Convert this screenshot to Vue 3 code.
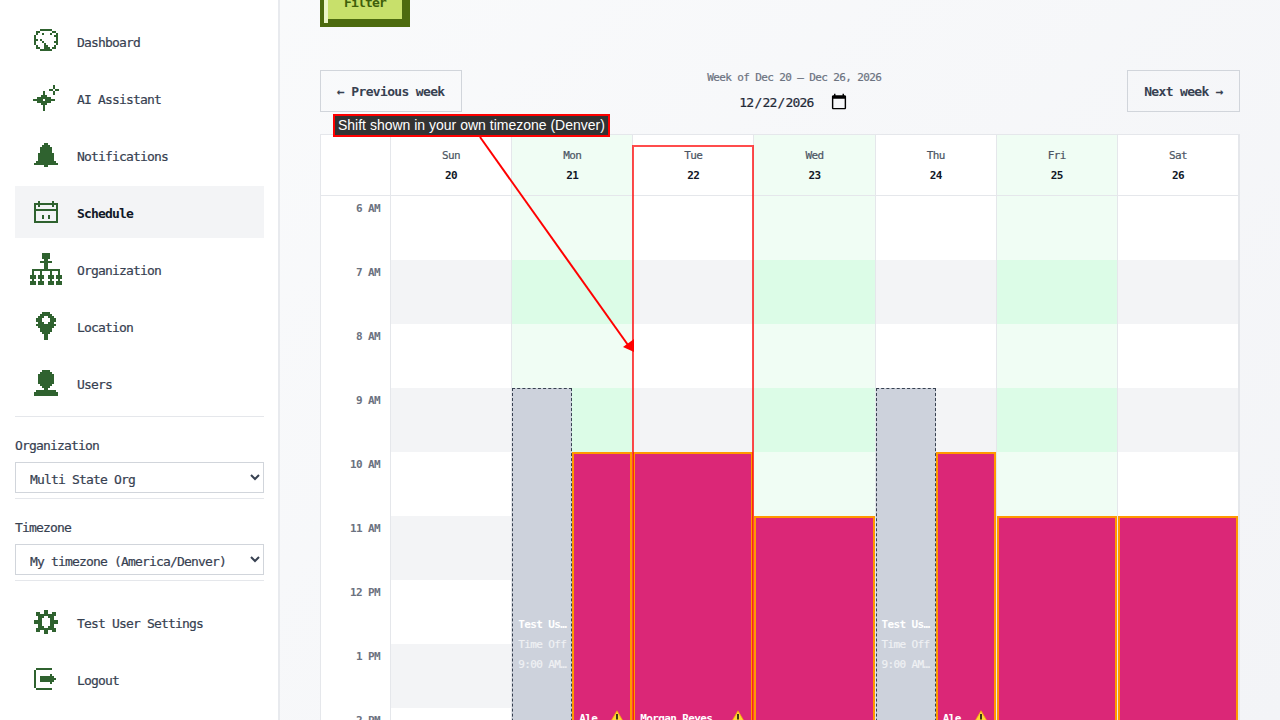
<script setup>
const rows = (list) => {
  let d = ''
  list.forEach((line, y) => {
    ;[...line].forEach((c, x) => {
      if (c === '#') d += `M${x} ${y}h1v1h-1z`
    })
  })
  return { d, w: list[0].length, h: list.length }
}

const icons = {
  dashboard: rows(['...######...','.##......##.','.#..#...#..#','#.........##','#..........#','##.#.......#','#...#.....##','#....#.....#','.#...##...#.','.##..###.##.','...######...','............']),
  ai: rows(['..........#..','..........#..','........##.##','.....#....#..','.....#....#..','....###......','..#######....','#####.#####..','..#######....','....###......','.....#.......','.....#.......','.....#.......']),
  bell: rows(['.....##.....','....####....','...######...','...######...','...######...','..########..','..########..','..########..','..########..','.##########.','############','.....##.....']),
  calendar: rows(['..#......#..','############','#.#......#.#','#..........#','############','#..........#','#..........#','#...#..#...#','#...#..#...#','#..........#','############']),
  org: rows(['......####......','......####......','......####......','.......##.......','.....######.....','.......##.......','.......##.......','.......##.......','.##############.','.#...#....#...#.','.#...#....#...#.','###.###..###.###','###.###..###.###','.#...#....#...#.','###.###..###.###','###.###..###.###']),
  location: rows(['...####...','..######..','.###..###.','###....###','###....###','.###..###.','##########','.########.','..######..','..######..','...####...','....##....','....##....','....##....']),
  users: rows(['....####....','...######...','..########..','..########..','..########..','..########..','..########..','...######...','....####....','.....##.....','.##########.','############','############']),
  gear: rows(['.....##.....','.##..##..##.','.##########.','..###..###..','..##....##..','####....####','####....####','..##....##..','..###..###..','.##########.','.##..##..##.','.....##.....']),
  logout: rows(['.########...','#...........','#...........','#.......#...','#..#######..','#..########.','#..#######..','#.......#...','#...........','#...........','.########...']),
}

const nav = [
  { label: 'Dashboard', icon: icons.dashboard },
  { label: 'AI Assistant', icon: icons.ai },
  { label: 'Notifications', icon: icons.bell },
  { label: 'Schedule', icon: icons.calendar, active: true },
  { label: 'Organization', icon: icons.org },
  { label: 'Location', icon: icons.location },
  { label: 'Users', icon: icons.users },
]
const footerNav = [
  { label: 'Test User Settings', icon: icons.gear },
  { label: 'Logout', icon: icons.logout },
]

const hours = ['6 AM','7 AM','8 AM','9 AM','10 AM','11 AM','12 PM','1 PM','2 PM','3 PM']
const HOUR = 64
const eventStyle = (e) => ({ top: (e.start - 6) * HOUR + 'px', height: e.h + 'px' })

const days = [
  { name: 'Sun', num: 20, events: [] },
  { name: 'Mon', num: 21, open: true, events: [
    { type: 'off', start: 9, h: 514, half: 'left' },
    { type: 'shift', start: 10, h: 580, half: 'right', name: 'Ale' },
  ] },
  { name: 'Tue', num: 22, events: [{ type: 'shift', start: 10, h: 580, name: 'Morgan Reyes' }] },
  { name: 'Wed', num: 23, open: true, events: [{ type: 'shift', start: 11, h: 516, name: 'Jordan Lee' }] },
  { name: 'Thu', num: 24, events: [
    { type: 'off', start: 9, h: 514, half: 'left' },
    { type: 'shift', start: 10, h: 580, half: 'right', name: 'Ale' },
  ] },
  { name: 'Fri', num: 25, open: true, events: [{ type: 'shift', start: 11, h: 516, name: 'Sam Ortiz' }] },
  { name: 'Sat', num: 26, events: [{ type: 'shift', start: 11, h: 516, name: 'Casey Kim' }] },
]
</script>

<template>
  <div class="app">
    <aside class="sidebar">
      <nav class="nav">
        <a v-for="item in nav" :key="item.label" class="nav-item" :class="{ active: item.active }">
          <span class="icon-box">
            <svg :width="item.icon.w * 2" :height="item.icon.h * 2" :viewBox="`0 0 ${item.icon.w} ${item.icon.h}`" shape-rendering="crispEdges"><path :d="item.icon.d" fill="#2f622f" /></svg>
          </span>
          <span class="nav-text">{{ item.label }}</span>
        </a>
      </nav>
      <div class="side-section first">
        <label class="side-label">Organization</label>
        <select class="side-select"><option>Multi State Org</option></select>
      </div>
      <div class="side-section">
        <label class="side-label">Timezone</label>
        <select class="side-select"><option>My timezone (America/Denver)</option></select>
      </div>
      <nav class="nav footer-nav">
        <a v-for="item in footerNav" :key="item.label" class="nav-item">
          <span class="icon-box">
            <svg :width="item.icon.w * 2" :height="item.icon.h * 2" :viewBox="`0 0 ${item.icon.w} ${item.icon.h}`" shape-rendering="crispEdges"><path :d="item.icon.d" fill="#2f622f" /></svg>
          </span>
          <span class="nav-text">{{ item.label }}</span>
        </a>
      </nav>
    </aside>

    <main class="main">
      <button class="filter-btn">Filter</button>

      <div class="week-bar">
        <button class="week-btn">← Previous week</button>
        <div class="week-center">
          <div class="week-title">Week of Dec 20 – Dec 26, 2026</div>
          <input class="date-input" type="date" value="2026-12-22" />
        </div>
        <button class="week-btn">Next week →</button>
      </div>

      <div class="calendar">
        <div class="head-row">
          <div class="corner"></div>
          <div v-for="d in days" :key="d.name" class="head-cell" :class="{ open: d.open }">
            <div class="day-name">{{ d.name }}</div>
            <div class="day-num">{{ d.num }}</div>
          </div>
        </div>
        <div class="body-row">
          <div class="time-col">
            <div v-for="h in hours" :key="h" class="time-cell">{{ h }}</div>
          </div>
          <div v-for="d in days" :key="d.name" class="day-col" :class="{ open: d.open }">
            <div v-for="h in hours" :key="h" class="hour-cell"></div>
            <div
              v-for="(e, i) in d.events"
              :key="i"
              class="event"
              :class="[e.type, e.half]"
              :style="eventStyle(e)"
            >
              <template v-if="e.type === 'off'">
                <div class="ev-line strong">Test Us…</div>
                <div class="ev-line dim">Time Off</div>
                <div class="ev-line dim">9:00 AM…</div>
              </template>
              <template v-else>
                <div class="ev-head">
                  <span class="ev-name">{{ e.name }}</span>
                  <svg class="warn" width="16" height="14" viewBox="0 0 16 14"><path d="M8 .8 15.4 13.4H.6Z" fill="#fdd835" stroke="#f59e0b" stroke-width="0.8" /><path d="M7.2 4h1.6v5.5H7.2zM7.2 10.5h1.6V12H7.2z" fill="#111" /></svg>
                </div>
              </template>
            </div>
          </div>
        </div>
        <div class="highlight"></div>
      </div>

      <svg class="arrow" width="1280" height="720" viewBox="0 0 1280 720">
        <line x1="480" y1="137" x2="628" y2="345" stroke="#ff0000" stroke-width="2" />
        <path d="M623 347 634 339V352Z" fill="#ff0000" />
      </svg>
      <div class="callout">Shift shown in your own timezone (Denver)</div>
    </main>
  </div>
</template>

<style>
html, body { margin: 0; overflow: hidden; }
</style>

<style scoped>
.app {
  display: flex;
  height: 720px;
  width: 1280px;
  overflow: hidden;
  font-family: "DejaVu Sans Mono", "Liberation Mono", monospace;
  -webkit-text-stroke: 0.2px;
  background: linear-gradient(135deg, #fafbfc, #f3f4f7);
}
.sidebar {
  width: 280px;
  flex-shrink: 0;
  box-sizing: border-box;
  padding: 15px 14px 0 15px;
  background: #fff;
  border-right: 2px solid #e8eaee;
}
.nav { display: flex; flex-direction: column; gap: 5px; }
.nav-item {
  height: 52px;
  display: flex;
  align-items: center;
  gap: 19px;
  padding-left: 19px;
  font-size: 13px;
  letter-spacing: -0.83px;
  font-weight: 500;
  color: #374151;
}
.nav-text { padding-top: 2px; }
.nav-item.active { background: #f3f4f6; color: #111827; font-weight: 700; -webkit-text-stroke: 0; }
.icon-box { width: 24px; flex-shrink: 0; display: flex; justify-content: center; }
.icon-box svg { flex-shrink: 0; display: block; }
.side-section { border-top: 1px solid #e5e7eb; padding-top: 19px; margin-bottom: 5px; }
.side-section.first { margin-top: 7px; }
.side-label {
  display: block;
  height: 20px;
  line-height: 20px;
  margin-bottom: 6px;
  font-size: 13px;
  letter-spacing: -0.83px;
  color: #374151;
}
.side-select {
  display: block;
  width: 100%;
  height: 31px;
  box-sizing: border-box;
  padding: 3px 10px 0;
  border: 1px solid #d1d5db;
  background: #fff;
  font-family: inherit;
  font-size: 13px;
  letter-spacing: -0.83px;
  color: #374151;
  border-radius: 0;
}
.footer-nav { border-top: 1px solid #e5e7eb; padding-top: 15px; }

.main {
  position: relative;
  flex: 1;
  box-sizing: border-box;
  padding: 0 40px;
  margin-top: -13px;
}
.filter-btn {
  position: relative;
  display: block;
  width: 90px;
  height: 40px;
  padding: 0 0 2px;
  box-sizing: border-box;
  background: #c8e06b;
  border: solid #4d6b0f;
  border-width: 0 8px 8px 8px;
  font-family: inherit;
  font-size: 13px;
  letter-spacing: -0.83px;
  font-weight: 700;
  color: #3f5f0a;
  -webkit-text-stroke: 0;
}
.filter-btn::before {
  content: "";
  position: absolute;
  left: -4px;
  top: 0;
  bottom: -4px;
  width: 4px;
  background: #ecf6c8;
}
.week-bar {
  display: flex;
  justify-content: space-between;
  align-items: flex-start;
  margin-top: 43px;
}
.week-btn {
  height: 42px;
  padding: 0 16px;
  box-sizing: border-box;
  background: transparent;
  border: 1px solid #d1d5db;
  font-family: inherit;
  font-size: 13px;
  letter-spacing: -0.66px;
  font-weight: 700;
  color: #374151;
  -webkit-text-stroke: 0;
}
.week-center { display: flex; flex-direction: column; align-items: center; padding-top: 1px; }
.week-title { font-size: 11px; letter-spacing: -0.62px; line-height: 14px; color: #6b7280; font-weight: 500; }
.date-input {
  margin: 5px 0 0 -2px;
  width: 110px;
  height: 24px;
  padding: 0;
  border: 0;
  background: transparent;
  font-family: inherit;
  font-size: 13px;
  letter-spacing: -0.8px;
  color: #1f2937;
}
.date-input::-webkit-calendar-picker-indicator {
  width: 18px;
  height: 18px;
  padding: 0;
  margin: 0;
}
.calendar {
  position: relative;
  margin-top: 20px;
  border: 1px solid #e5e7eb;
  background: #fff;
}
.head-row, .body-row { display: grid; grid-template-columns: 70px repeat(7, 1fr); }
.head-row { height: 60px; border-bottom: 1px solid #e5e7eb; }
.corner { border-right: 1px solid #e5e7eb; }
.head-cell {
  border-right: 1px solid #e5e7eb;
  text-align: center;
  padding-top: 12px;
  box-sizing: border-box;
}
.head-cell.open { background: #f0fdf4; }
.day-name { font-size: 11px; letter-spacing: -0.62px; line-height: 16px; color: #4b5563; font-weight: 500; padding-top: 1px; }
.day-num { margin-top: 4px; font-size: 11px; letter-spacing: -0.62px; line-height: 16px; color: #111827; font-weight: 700; -webkit-text-stroke: 0; }
.time-col { border-right: 1px solid #e5e7eb; }
.time-cell {
  height: 64px;
  box-sizing: border-box;
  padding: 6px 10px 0 0;
  text-align: right;
  font-size: 11px;
  letter-spacing: -0.62px;
  line-height: 14px;
  color: #6b7280;
  font-weight: 700;
  -webkit-text-stroke: 0;
}
.day-col { position: relative; border-right: 1px solid #e5e7eb; }
.hour-cell { height: 64px; background: #fff; }
.hour-cell:nth-child(even) { background: #f3f4f6; }
.day-col.open .hour-cell { background: #f0fdf4; }
.day-col.open .hour-cell:nth-child(even) { background: #dcfce7; }
.event {
  position: absolute;
  left: 0;
  width: 100%;
  box-sizing: border-box;
  overflow: hidden;
  color: #fff;
  font-size: 11px;
  letter-spacing: -0.62px;
}
.event.left { width: 50%; }
.event.right { width: 50%; left: 50%; }
.event.off {
  background: #cdd2dc;
  border: 1px dashed #374151;
  display: flex;
  flex-direction: column;
  justify-content: center;
  padding: 0 5px;
}
.event.shift {
  background: #db2777;
  border: 2px solid #ff9800;
  display: flex;
  flex-direction: column;
  justify-content: center;
  padding: 0 5px;
}
.ev-line { line-height: 20px; white-space: nowrap; }
.ev-line.strong { font-weight: 700; -webkit-text-stroke: 0; }
.ev-line.dim { opacity: 0.7; }
.ev-head {
  display: flex;
  justify-content: space-between;
  align-items: flex-start;
  height: 60px;
  font-weight: 700;
  line-height: 14px;
  white-space: nowrap;
  -webkit-text-stroke: 0;
}
.warn { flex-shrink: 0; margin-top: -2px; }
.highlight {
  position: absolute;
  left: 311px;
  top: 10px;
  width: 122px;
  bottom: 0;
  box-sizing: border-box;
  border: 2px solid rgba(255, 0, 0, 0.7);
  pointer-events: none;
}
.arrow {
  position: absolute;
  left: -280px;
  top: 13px;
  pointer-events: none;
}
.callout {
  position: absolute;
  left: 53px;
  top: 127px;
  height: 23px;
  box-sizing: border-box;
  padding: 0 3px;
  border: 2px solid #ff0000;
  background: #333;
  color: #fff;
  font-family: "Liberation Sans", sans-serif;
  font-size: 14px;
  line-height: 19px;
  white-space: nowrap;
  -webkit-text-stroke: 0;
}
</style>
